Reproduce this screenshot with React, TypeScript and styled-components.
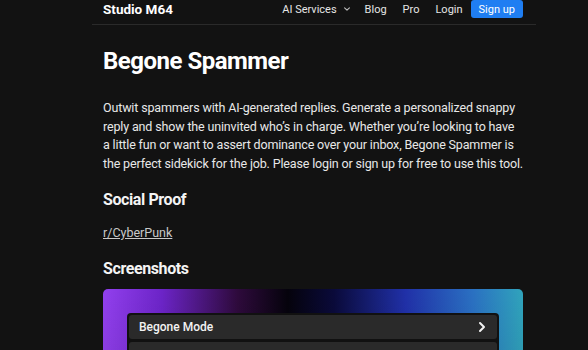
import styled, { createGlobalStyle } from "styled-components"

const Globalstyle = createGlobalStyle`
  body {
    margin: 0;
    background: #121212;
    font-family: Roboto, "Noto Sans", sans-serif;
    color: #ececec;
  }
`

function ChevronDown() {
  return (
    <svg width="8" height="8" viewBox="0 0 10 10" fill="none">
      <path d="M2 3.5 L5 6.5 L8 3.5" stroke="#bdbdbd" strokeWidth="1.4" strokeLinecap="round" strokeLinejoin="round" />
    </svg>
  )
}

function ChevronRight() {
  return (
    <svg width="10" height="12" viewBox="0 0 10 12" fill="none">
      <path d="M3 2 L7 6 L3 10" stroke="#f2f2f2" strokeWidth="2" strokeLinecap="round" strokeLinejoin="round" />
    </svg>
  )
}

function App() {
  return (
    <Page>
      <Globalstyle />
      <Header>
        <Brand>Studio M64</Brand>
        <Nav>
          <NavItem>
            AI Services <ChevronDown />
          </NavItem>
          <NavItem>Blog</NavItem>
          <NavItem>Pro</NavItem>
          <NavItem>Login</NavItem>
          <SignUp>Sign up</SignUp>
        </Nav>
      </Header>
      <Main>
        <Title>Begone Spammer</Title>
        <Intro>
          Outwit spammers with AI-generated replies. Generate a personalized snappy
          reply and show the uninvited who’s in charge. Whether you’re looking to have
          a little fun or want to assert dominance over your inbox, Begone Spammer is
          the perfect sidekick for the job. Please login or sign up for free to use this tool.
        </Intro>
        <SectionTitle $after={16}>Social Proof</SectionTitle>
        <ProofLink href="#">r/CyberPunk</ProofLink>
        <SectionTitle $after={11}>Screenshots</SectionTitle>
        <Shot>
          <Panel>
            <PanelRow>
              <span>Begone Mode</span>
              <ChevronRight />
            </PanelRow>
            <PanelRow />
          </Panel>
        </Shot>
      </Main>
    </Page>
  )
}

export default App

const Page = styled.div`
  width: 444px;
  margin-left: 92px;
  height: 350px;
  overflow: hidden;
`

const Header = styled.header`
  display: flex;
  align-items: center;
  justify-content: space-between;
  height: 18px;
  padding: 0 13px 6px 11px;
  border-bottom: 1px solid #2a2a2a;
`

const Brand = styled.div`
  font-size: 13.5px;
  font-weight: 700;
  color: #fff;
`

const Nav = styled.nav`
  display: flex;
  align-items: center;
  gap: 16px;
`

const NavItem = styled.div`
  display: flex;
  align-items: center;
  gap: 6px;
  font-size: 11px;
  color: #e6e6e6;
  &:first-child {
    margin-right: -2px;
  }
`

const SignUp = styled.button`
  height: 18px;
  padding: 0 8px;
  margin-left: -8px;
  border: none;
  border-radius: 3px;
  background: #1f7ef2;
  color: #fff;
  font-family: inherit;
  font-size: 11px;
`

const Main = styled.main`
  padding: 0 13px 0 11px;
`

const Title = styled.h1`
  margin: 22px 0 24px;
  font-size: 24px;
  font-weight: 700;
  letter-spacing: -0.5px;
  color: #fff;
`

const Intro = styled.p`
  margin: 0 0 17px;
  font-size: 12.5px;
  letter-spacing: -0.15px;
  line-height: 18.5px;
  color: #e8e8e8;
`

const SectionTitle = styled.h2<{ $after: number }>`
  margin: 0 0 ${(p) => p.$after}px;
  font-size: 16px;
  font-weight: 700;
  letter-spacing: -0.4px;
  color: #f4f4f4;
`

const ProofLink = styled.a`
  display: block;
  margin-bottom: 19px;
  font-size: 12.5px;
  color: #c9c9c9;
  text-decoration: underline;
`

const Shot = styled.div`
  height: 120px;
  border-radius: 5px;
  padding: 24px 24px 0;
  background:
    linear-gradient(180deg, rgba(0, 0, 0, 0) 0%, rgba(0, 0, 0, 0.12) 100%),
    linear-gradient(90deg, #9240ee 0%, #6c24c8 14%, #2e0a3c 32%, #05030c 44%, #0a0a3a 55%, #2030a8 72%, #2a70c2 88%, #30a4bc 100%);
`

const Panel = styled.div`
  display: flex;
  flex-direction: column;
  gap: 3px;
  height: 100%;
  background: #111;
  border-radius: 4px 4px 0 0;
  padding: 2px;
  box-sizing: border-box;
`

const PanelRow = styled.div`
  display: flex;
  align-items: center;
  justify-content: space-between;
  height: 24px;
  padding: 0 10px;
  background: #2a2a2a;
  border-radius: 3px;
  font-size: 12px;
  font-weight: 500;
  color: #f2f2f2;
`
